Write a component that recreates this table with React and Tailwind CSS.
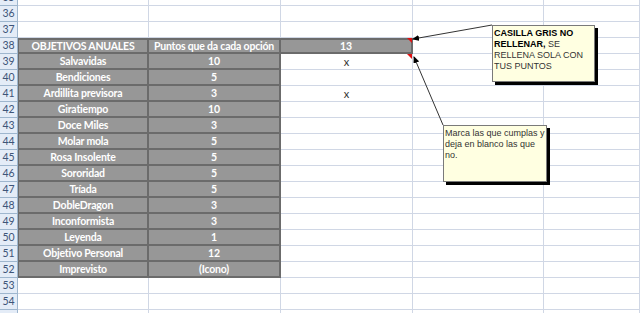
import React from "react";

const goals = [
  ["Salvavidas", "10"],
  ["Bendiciones", "5"],
  ["Ardillita previsora", "3"],
  ["Giratiempo", "10"],
  ["Doce Miles", "3"],
  ["Molar mola", "5"],
  ["Rosa Insolente", "5"],
  ["Sororidad", "5"],
  ["Tríada", "5"],
  ["DobleDragon", "3"],
  ["Inconformista", "3"],
  ["Leyenda", "1"],
  ["Objetivo Personal", "12"],
  ["Imprevisto", "(Icono)"],
];

const font = { fontFamily: "Lato, 'Liberation Sans', sans-serif" };

// one spreadsheet row: a, b, c are cell contents; gray marks which cells are shaded
function Row({ n, a, b, c, grayA, grayB, grayC, top, mark }) {
  const plain = "border-r border-b border-[#d0d7e5]";
  const gray =
    "border-r-2 border-b-2 border-[#6b6b6b] bg-[#979797] text-white font-bold tracking-[-0.2px]";
  return (
    <div className="flex h-4 whitespace-nowrap text-[10.5px] leading-none">
      <div className="flex w-[18px] shrink-0 items-center justify-center border-r border-b border-[#9eb6ce] bg-[#e4ecf7] text-[10.5px] text-[#3d5478]">
        {n}
      </div>
      <div className={`flex w-[131px] shrink-0 items-center justify-center ${grayA ? gray + " border-l" : plain} ${top ? "border-t-2" : ""}`}>
        {a}
      </div>
      <div className={`flex w-[132px] shrink-0 items-center justify-center ${grayB ? gray : plain} ${top ? "border-t-2" : ""}`}>
        {b}
      </div>
      <div className={`flex w-[132px] shrink-0 items-center justify-center ${grayC ? gray : plain} ${top ? "border-t-2" : ""} ${mark ? "text-[11px] text-[#333]" : ""}`}>
        {c}
      </div>
      <div className={`w-[131px] shrink-0 ${plain}`} />
      <div className={`flex-1 ${plain}`} />
    </div>
  );
}

export default function App() {
  const rows = [];
  for (let n = 35; n <= 55; n++) {
    if (n === 38) {
      rows.push(
        <Row key={n} n={n} a="OBJETIVOS ANUALES" b="Puntos que da cada opción" c="13" grayA grayB grayC top />
      );
    } else if (n > 38 && n <= 52) {
      const [a, b] = goals[n - 39];
      const c = n === 39 || n === 41 ? "x" : "";
      rows.push(<Row key={n} n={n} a={a} b={b} c={c} grayA grayB mark />);
    } else {
      rows.push(<Row key={n} n={n} />);
    }
  }

  return (
    <div className="relative h-[313px] w-[640px] overflow-hidden bg-white" style={font}>
      <div className="-mt-[10px]">{rows}</div>

      <svg className="absolute inset-0" width="640" height="313" viewBox="0 0 640 313">
        <defs>
          <marker id="ah" markerWidth="7" markerHeight="6" refX="6" refY="3" orient="auto" markerUnits="userSpaceOnUse">
            <path d="M0 0 L7 3 L0 6 Z" fill="#000" />
          </marker>
        </defs>
        <polygon points="407,38 412,38 412,43" fill="#e01010" />
        <polygon points="407,54 412,54 412,59" fill="#e01010" />
        <line x1="492" y1="25" x2="413" y2="39" stroke="#333" strokeWidth="1" markerEnd="url(#ah)" />
        <line x1="443" y1="125" x2="414" y2="57" stroke="#333" strokeWidth="1" markerEnd="url(#ah)" />
      </svg>

      <div
        className="absolute left-[492px] top-[25px] h-[57px] w-[103px] border border-[#7a7a7a] bg-[#ffffe1] px-[1px] pt-[2px] text-[9px] leading-[11px] text-[#333] shadow-[3px_3px_0_#000]"
        style={{ fontFamily: "'Liberation Sans', sans-serif" }}
      >
        <b className="text-black">CASILLA GRIS NO RELLENAR,</b> SE RELLENA SOLA CON TUS PUNTOS
      </div>

      <div
        className="absolute left-[443px] top-[125px] h-[57px] w-[104px] border border-[#7a7a7a] bg-[#ffffe1] px-[1px] pt-[2px] text-[9px] leading-[11px] text-[#333] shadow-[3px_3px_0_#000]"
        style={{ fontFamily: "'Liberation Sans', sans-serif" }}
      >
        Marca las que cumplas y deja en blanco las que no.
      </div>
    </div>
  );
}
